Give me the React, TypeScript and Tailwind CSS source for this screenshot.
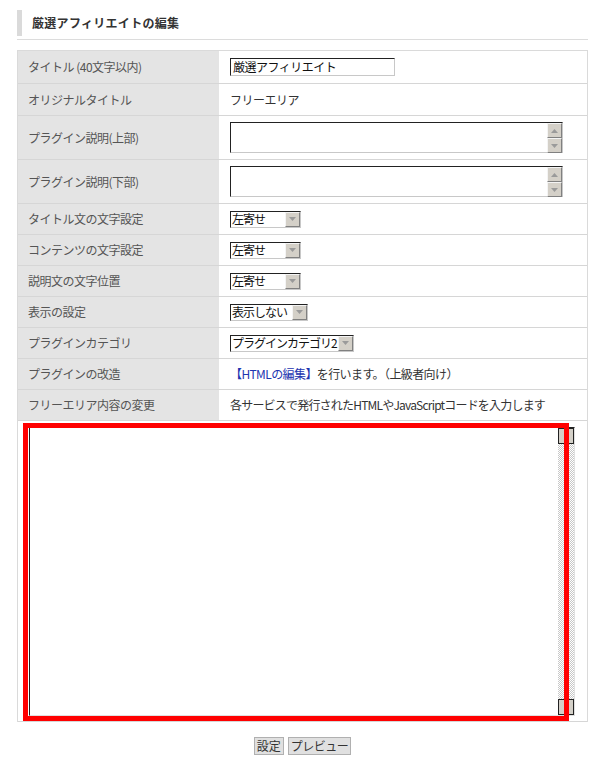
import type { ReactNode } from 'react'

const FONT = { fontFamily: '"Noto Sans CJK JP", "Noto Sans", sans-serif' }

// classic sunken field border
const sunken = 'border border-t-[#222] border-l-[#222] border-r-[#c8c8c8] border-b-[#c8c8c8] bg-white'

function ScrollButton({ dir }: { dir: 'up' | 'down' }) {
  return (
    <div className="w-[15px] h-[15px] shrink-0 bg-[#d4d0c8] border border-t-[#f4f4f4] border-l-[#f4f4f4] border-r-[#808080] border-b-[#808080] flex items-center justify-center">
      <svg width="7" height="4" viewBox="0 0 7 4">
        {dir === 'up'
          ? <path d="M3.5 0 L7 4 L0 4 Z" fill="#9a9a9a" />
          : <path d="M0 0 L7 0 L3.5 4 Z" fill="#9a9a9a" />}
      </svg>
    </div>
  )
}

function SmallTextarea() {
  return (
    <div className={`${sunken} w-[333px] h-[31px] flex justify-end`}>
      <div className="flex flex-col">
        <ScrollButton dir="up" />
        <ScrollButton dir="down" />
      </div>
    </div>
  )
}

function Select({ value, width }: { value: string; width: string }) {
  return (
    <div className={`${sunken} ${width} h-[17px] flex items-center justify-between pl-[1px] text-[12px] leading-none text-[#111] whitespace-nowrap overflow-hidden`}>
      <span className="tracking-[-1px]">{value}</span>
      <ScrollButton dir="down" />
    </div>
  )
}

function Row({ label, height, children }: { label: string; height: string; children: ReactNode }) {
  return (
    <div className={`flex ${height} border-b border-[#d6d6d6]`}>
      <div className="w-[201px] shrink-0 bg-[#e4e4e4] flex items-center pl-[10px] text-[12px] text-[#555] tracking-[-0.5px]">
        {label}
      </div>
      <div className="flex-1 border-l-2 border-white flex items-center pl-[9px] text-[12px] text-[#333] whitespace-nowrap">
        {children}
      </div>
    </div>
  )
}

export default function App() {
  return (
    <div className="w-[591px] min-h-[771px] bg-white pl-[17px] pr-[3px] pt-[10px]" style={FONT}>
      {/* heading */}
      <div className="border-b border-[#dcdcdc] pb-[3px]">
        <div className="border-l-[5px] border-[#dadada] h-[26px] flex items-center pl-[10px] text-[12px] font-bold text-[#333] tracking-[0.3px]">
          厳選アフィリエイトの編集
        </div>
      </div>

      {/* settings table */}
      <div className="mt-[10px] border border-[#dadada] border-b-0">
        <Row label="タイトル (40文字以内)" height="h-[33px]">
          <div className={`${sunken} w-[165px] h-[18px] flex items-center pl-[2px] text-[12px] leading-none text-[#111] tracking-[-0.5px]`}>
            厳選アフィリエイト
          </div>
        </Row>
        <Row label="オリジナルタイトル" height="h-[32px]"><span className="tracking-[-0.5px]">フリーエリア</span></Row>
        <Row label="プラグイン説明(上部)" height="h-[44px]"><SmallTextarea /></Row>
        <Row label="プラグイン説明(下部)" height="h-[44px]"><SmallTextarea /></Row>
        <Row label="タイトル文の文字設定" height="h-[31px]"><Select value="左寄せ" width="w-[71px]" /></Row>
        <Row label="コンテンツの文字設定" height="h-[31px]"><Select value="左寄せ" width="w-[71px]" /></Row>
        <Row label="説明文の文字位置" height="h-[31px]"><Select value="左寄せ" width="w-[71px]" /></Row>
        <Row label="表示の設定" height="h-[31px]"><Select value="表示しない" width="w-[78px]" /></Row>
        <Row label="プラグインカテゴリ" height="h-[31px]"><Select value="プラグインカテゴリ2" width="w-[124px]" /></Row>
        <Row label="プラグインの改造" height="h-[31px]">
          <span className="tracking-[-0.6px]">
            <a href="#" className="text-[#1d35b0]">【HTMLの編集】</a>を行います。（上級者向け）
          </span>
        </Row>
        <Row label="フリーエリア内容の変更" height="h-[31px]">
          <span className="tracking-[-0.8px]">各サービスで発行されたHTMLやJavaScriptコードを入力します</span>
        </Row>

        {/* free area source */}
        <div className="relative h-[301px] border-b border-[#d6d6d6] pl-[11px] pt-[6px]">
          <div className="w-[546px] h-[289px] border border-t-[#222] border-l-[#222] border-r-[#e0e0e0] border-b-[#e0e0e0] bg-white flex justify-end">
            <div className="w-[16px] flex flex-col justify-between bg-[repeating-conic-gradient(#c8c8c8_0_25%,#ffffff_0_50%)] bg-[length:2px_2px]">
              <div className="h-[16px] bg-[#d4d0c8] border border-[#222]" />
              <div className="h-[16px] bg-[#d4d0c8] border border-[#222]" />
            </div>
          </div>
          <div className="absolute top-[2px] left-[5px] w-[546px] h-[298px] border-[5px] border-[#ff0000] pointer-events-none" />
        </div>
      </div>

      {/* actions */}
      <div className="flex justify-center gap-[4px] mt-[15px]">
        <button className="h-[18px] px-[2px] bg-[#e0e0e0] border border-[#b0b0b0] text-[12px] leading-none text-[#333]">設定</button>
        <button className="h-[18px] px-[2px] bg-[#e0e0e0] border border-[#b0b0b0] text-[12px] leading-none text-[#333] tracking-[-0.5px]">プレビュー</button>
      </div>
    </div>
  )
}
